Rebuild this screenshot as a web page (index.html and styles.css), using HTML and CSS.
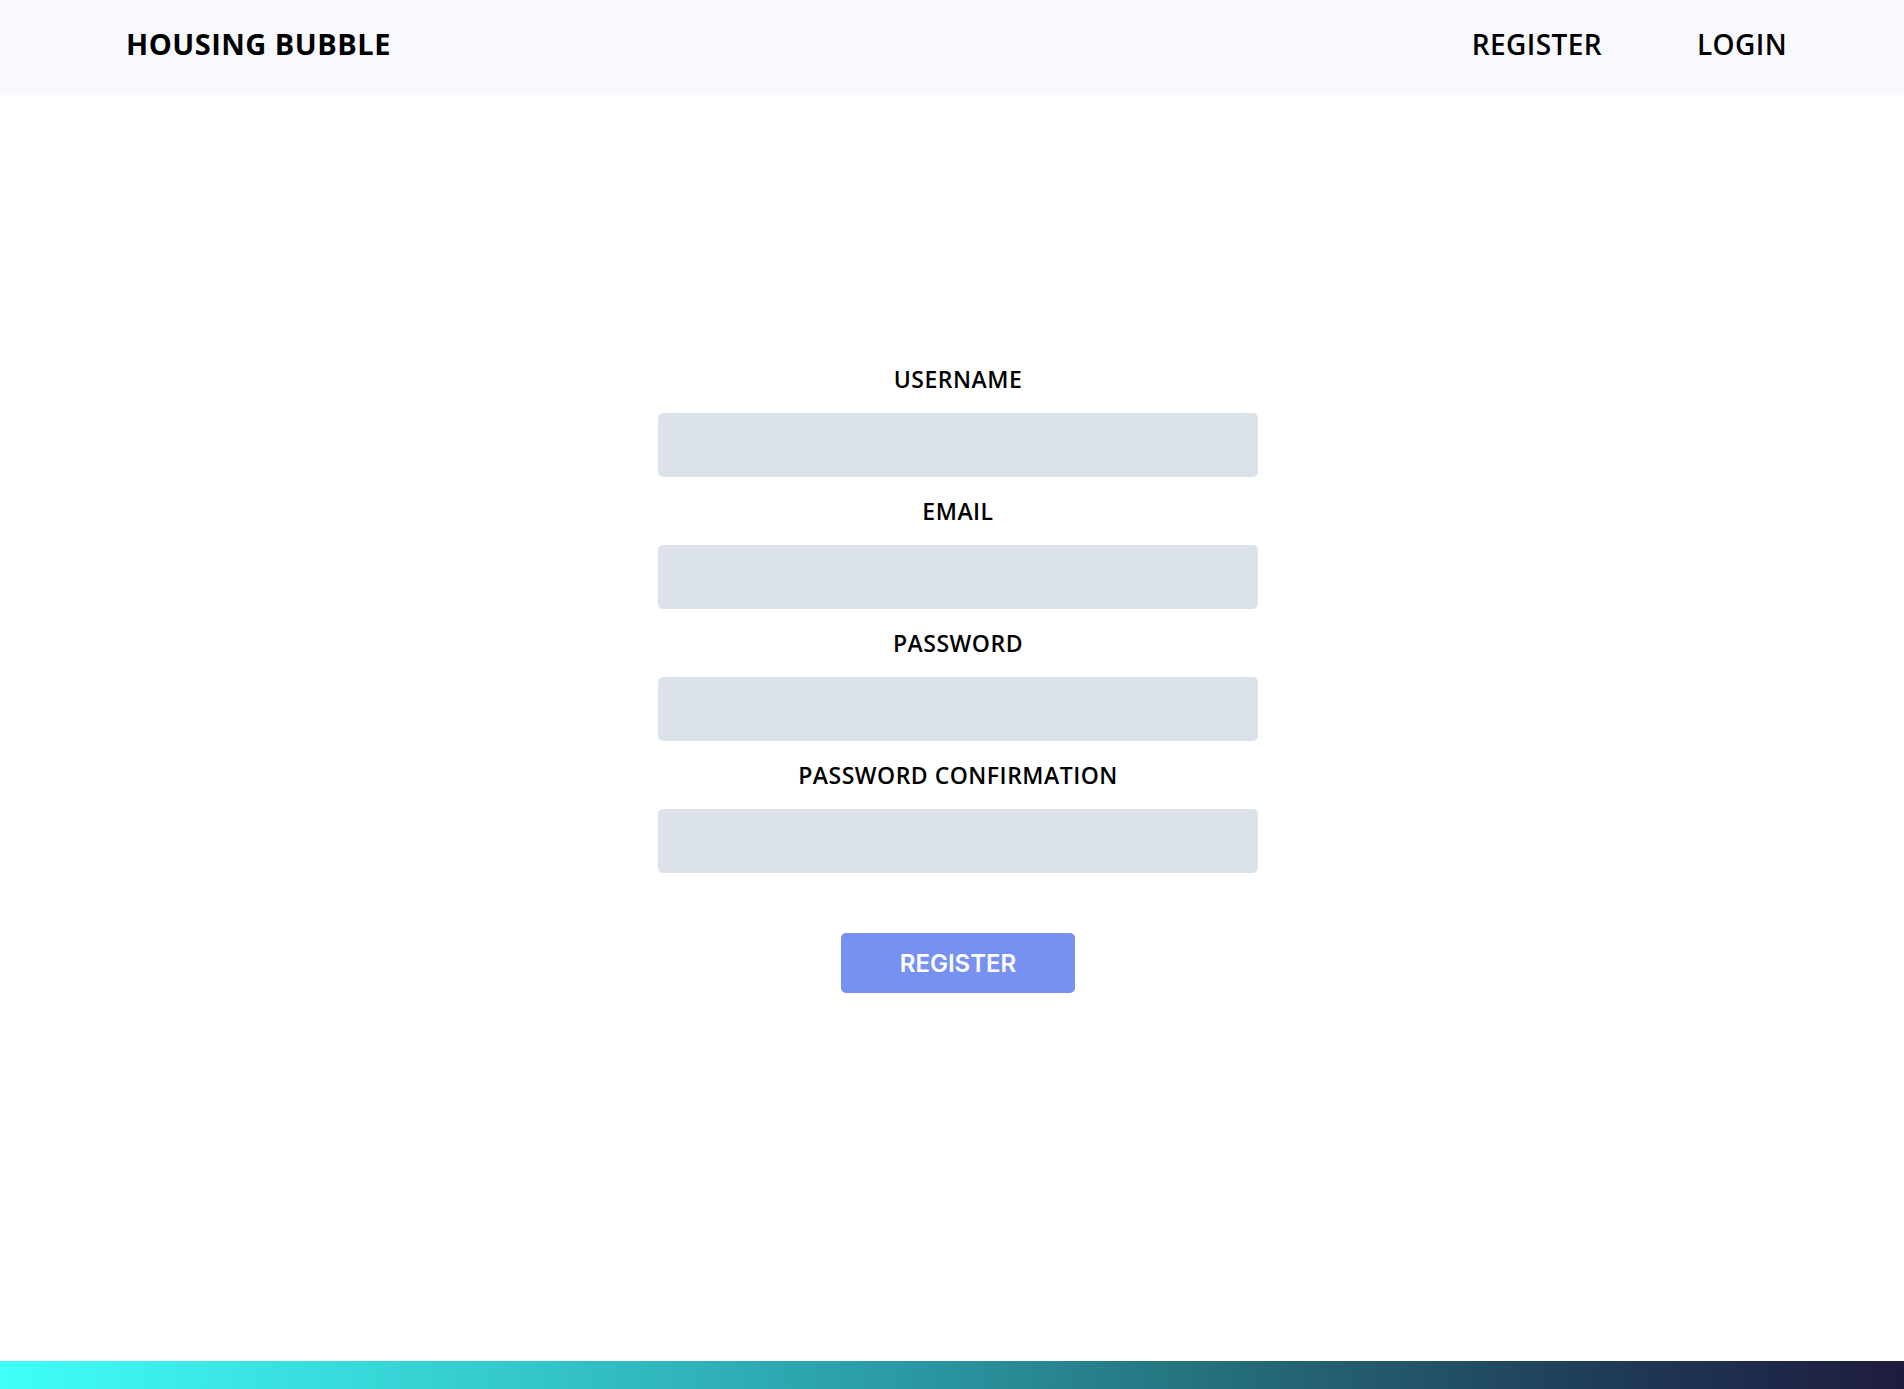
FILE: index.html
```html
<!DOCTYPE html>
<html lang="en">
<head>
<meta charset="utf-8">
<title>Housing Bubble</title>
<link rel="stylesheet" href="styles.css">
</head>
<body>
<div class="page">
  <header class="header">
    <div class="logo">HOUSING BUBBLE</div>
    <nav class="nav">
      <a class="nav-link" href="#">REGISTER</a>
      <a class="nav-link" href="#">LOGIN</a>
    </nav>
  </header>
  <main class="main">
    <form class="form">
      <label class="label" for="username">USERNAME</label>
      <input class="input" id="username" type="text">
      <label class="label" for="email">EMAIL</label>
      <input class="input" id="email" type="email">
      <label class="label" for="password">PASSWORD</label>
      <input class="input" id="password" type="password">
      <label class="label" for="confirm">PASSWORD CONFIRMATION</label>
      <input class="input" id="confirm" type="password">
      <button class="button" type="button">REGISTER</button>
    </form>
  </main>
  <footer class="footer"></footer>
</div>
</body>
</html>
```
FILE: styles.css
```css
* { box-sizing: border-box; }
html, body { margin: 0; padding: 0; }
body {
  font-family: "Open Sans", "Liberation Sans", sans-serif;
  color: #000;
  background: #fff;
}
.page {
  min-height: 100vh;
  display: flex;
  flex-direction: column;
}
.header {
  height: 95px;
  background: #f7f9fe;
  display: flex;
  align-items: center;
  justify-content: space-between;
  padding: 0 117px 8px 126px;
}
.logo {
  font-size: 29px;
  font-weight: 700;
  letter-spacing: 0.5px;
}
.nav {
  display: flex;
  gap: 95px;
}
.nav-link {
  color: #000;
  text-decoration: none;
  font-size: 28px;
  font-weight: 600;
  letter-spacing: 0.4px;
}
.main {
  flex: 1;
  display: flex;
  justify-content: center;
  padding: 250px 0 0 12px;
}
.form {
  width: 600px;
  display: flex;
  flex-direction: column;
  align-items: center;
}
.label {
  display: block;
  height: 68px;
  line-height: 68px;
  font-size: 23px;
  font-weight: 600;
  letter-spacing: 0.5px;
  text-align: center;
}
.input {
  width: 600px;
  height: 64px;
  border: none;
  border-radius: 5px;
  background: #dce2ea;
  outline: none;
}
.button {
  margin-top: 60px;
  width: 234px;
  height: 60px;
  border: none;
  border-radius: 5px;
  background: #7791f3;
  color: #fff;
  font-family: "Inter", "Open Sans", sans-serif;
  font-size: 24px;
  font-weight: 600;
}
.footer {
  height: 28px;
  background: linear-gradient(to right, #3ffff9 0%, #34c6ca 28%, #2a98a2 48%, #235f6f 70%, #1f3a56 85%, #1e1b3e 100%);
}
```
